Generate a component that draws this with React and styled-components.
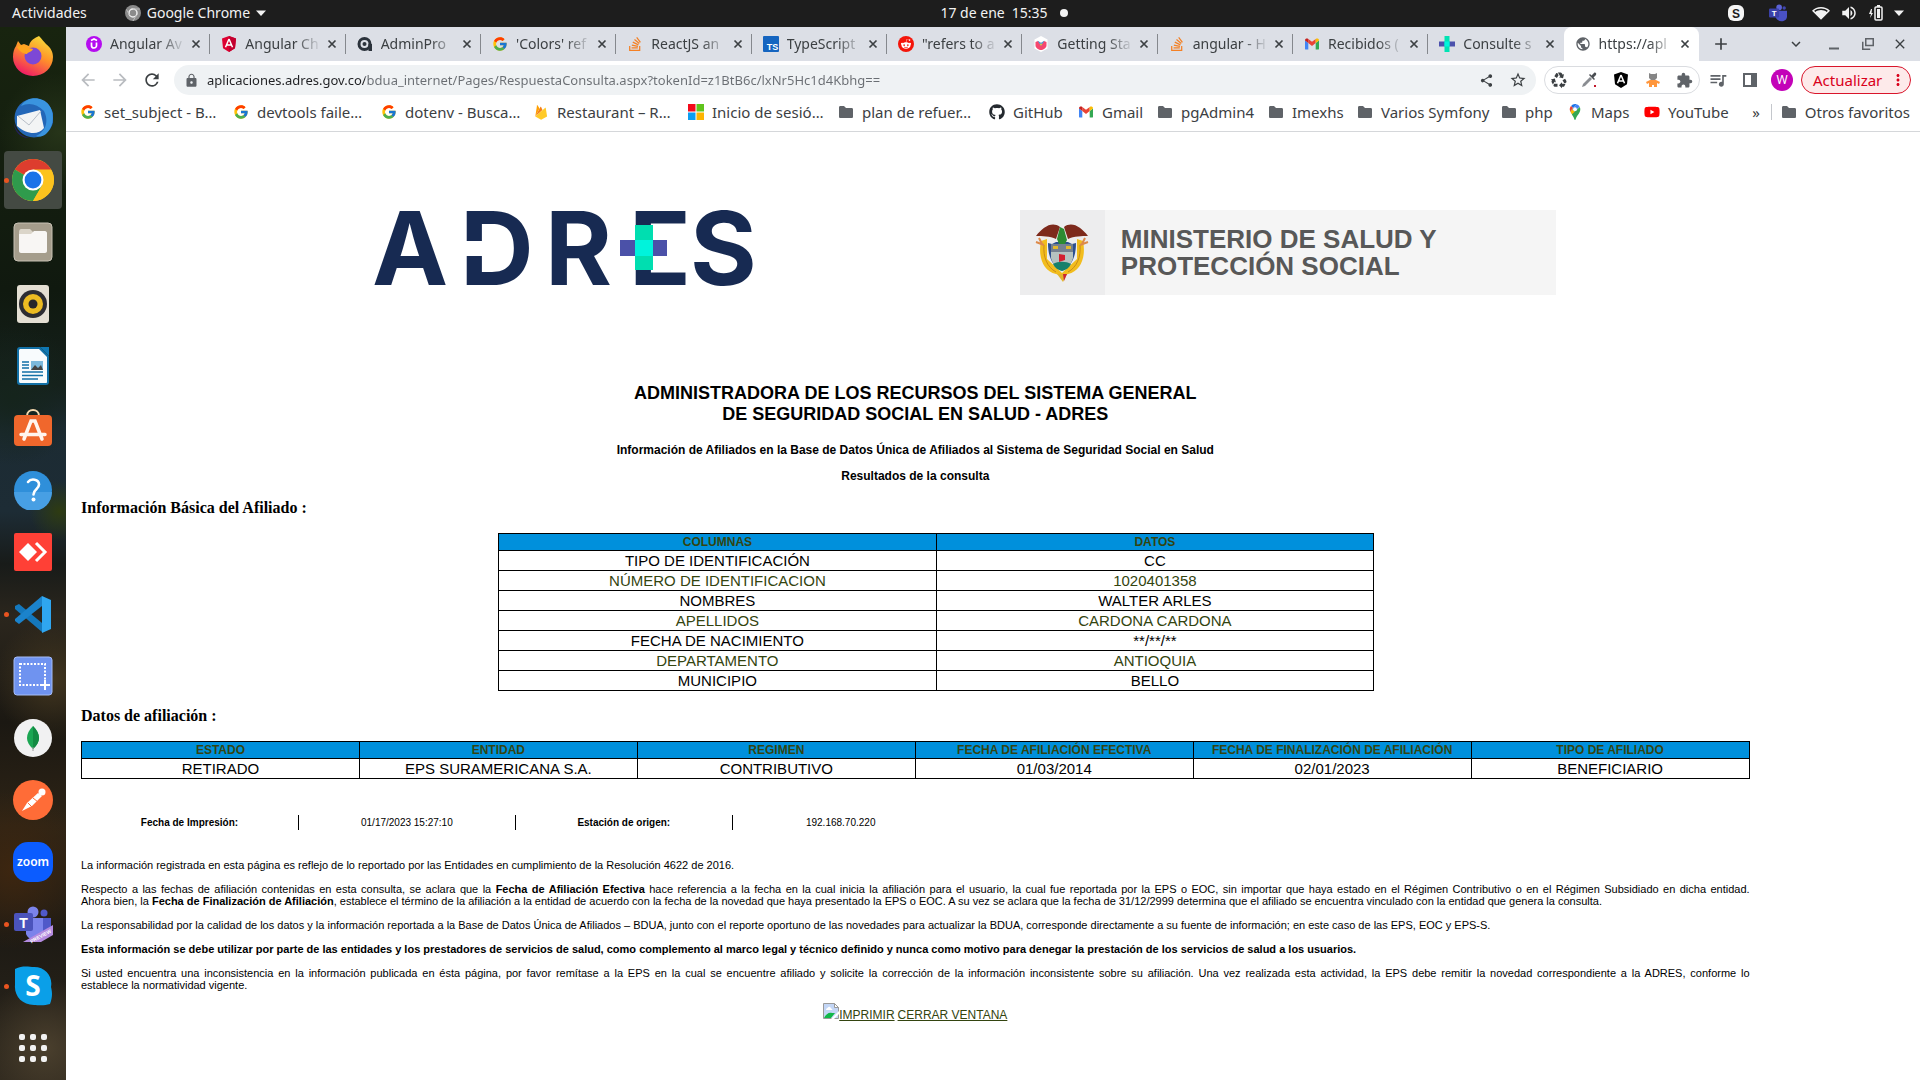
import React from "react";
import styled, { createGlobalStyle, css } from "styled-components";
import { FcGoogle } from "react-icons/fc";
import { FaRedditAlien, FaStackOverflow, FaGithub, FaYoutube } from "react-icons/fa";
import {
  MdArrowBack, MdArrowForward, MdRefresh, MdLock, MdShare, MdStarBorder, MdExtension,
  MdQueueMusic, MdPublic, MdMoreVert, MdClose, MdAdd, MdKeyboardArrowDown, MdVolumeUp,
  MdRecycling, MdNetworkWifi,
} from "react-icons/md";

const ui = '"Noto Sans", "Open Sans", sans-serif';
const arial = '"Liberation Sans", Arial, sans-serif';
const olive = "#33440f";

const GlobalStyle = createGlobalStyle`
  * { box-sizing: border-box; }
  body { margin: 0; background: #fff; }
  button { border: 0; padding: 0; margin: 0; background: none; color: inherit; font: inherit; }
  svg { display: block; flex: none; }
  a { color: inherit; }
`;

const Desktop = styled.div`
  display: grid;
  grid-template-columns: 66px minmax(0, 1fr);
  grid-template-rows: 27px 1fr;
  min-height: 100vh;
  font-family: ${ui};
`;

/* ---------- system bar ---------- */
const SystemBar = styled.header`
  grid-column: 1 / -1;
  display: grid;
  grid-template-columns: 1fr auto 1fr;
  align-items: center;
  padding: 0 16px 1px 12px;
  background: #1d1d1d;
  color: #f2f2f2;
  font-size: 14px;
  line-height: 20px;
`;
const BarGroup = styled.div`
  display: flex;
  align-items: center;
  gap: ${(p) => p.$gap}px;
  justify-content: ${(p) => (p.$end ? "flex-end" : "flex-start")};
`;
const BarButton = styled.button`
  display: flex;
  align-items: center;
  gap: 6px;
`;
const Clock = styled.div`
  display: flex;
  align-items: center;
  gap: 7px;
  padding-left: 92px;
`;
const Dot = styled.span`
  width: 8px;
  height: 8px;
  margin-left: 5px;
  border-radius: 50%;
  background: #f2f2f2;
`;

/* ---------- dock ---------- */
const DockBar = styled.nav`
  display: flex;
  flex-direction: column;
  align-items: center;
  gap: 4px;
  background:
    radial-gradient(circle at 90% 10%, #263419 0, transparent 60px),
    radial-gradient(circle at 20% 35%, #15241c 0, transparent 70px),
    radial-gradient(circle at 90% 46%, #2e3b12 0, transparent 30px),
    radial-gradient(circle at 80% 62%, #41351f 0, transparent 60px),
    radial-gradient(circle at 20% 80%, #3d2610 0, transparent 80px),
    radial-gradient(circle at 70% 97%, #4a3f2d 0, transparent 70px),
    linear-gradient(#18240f 0, #10190f 25%, #15201c 34%, #1c2b33 38%, #1d2c35 46%, #181b19 51%, #2b261d 56%, #1b1812 66%, #2e2416 76%, #1d1a14 86%, #2d271d 100%);
`;
const DockSlot = styled.button`
  display: grid;
  place-items: center;
  position: relative;
  width: 58px;
  height: 58px;
  border-radius: 4px;
  background: ${(p) => (p.$active ? "#444a43" : "transparent")};
  ${(p) =>
    p.$running &&
    css`
      &::before {
        content: "";
        position: absolute;
        left: 0;
        top: 27px;
        width: 5px;
        height: 5px;
        border-radius: 50%;
        background: #e95420;
      }
    `}
`;

/* ---------- browser ---------- */
const Browser = styled.div`
  display: flex;
  flex-direction: column;
  min-width: 0;
  background: #fff;
`;
const TabStrip = styled.div`
  display: flex;
  align-items: stretch;
  height: 34px;
  padding: 0 2px 0 9px;
  background: #dcdfe6;
  color: #3c4043;
`;
const TabList = styled.div`
  display: flex;
  flex: 1 1 auto;
  max-width: 1624px;
  min-width: 0;
`;
const Tab = styled.div`
  display: flex;
  flex: 1 1 0;
  min-width: 0;
  align-items: center;
  gap: 8px;
  padding: 0 9px 0 11px;
  border-radius: ${(p) => (p.$active ? "8px 8px 0 0" : "0")};
  background:
    ${(p) => (p.$active ? "#fff" : p.$divider ? "linear-gradient(#85888d, #85888d) right center / 1px 20px no-repeat" : "none")};
`;
const TabTitle = styled.span`
  flex: 1;
  min-width: 0;
  overflow: hidden;
  white-space: nowrap;
  font-size: 14px;
  line-height: 20px;
  -webkit-mask-image: linear-gradient(90deg, #000 68%, rgba(0, 0, 0, 0.1));
  mask-image: linear-gradient(90deg, #000 68%, rgba(0, 0, 0, 0.1));
`;
const IconButton = styled.button`
  display: grid;
  place-items: center;
  width: ${(p) => p.$w || 16}px;
  height: 100%;
  color: ${(p) => p.$color || "#3c4043"};
`;
const WindowButtons = styled.div`
  display: flex;
  margin-left: auto;
`;
const Toolbar = styled.div`
  display: flex;
  align-items: center;
  height: 38px;
  padding: 0 9px 0 6px;
  color: #5f6368;
`;
const AddressBar = styled.label`
  display: flex;
  align-items: center;
  flex: 1;
  min-width: 0;
  height: 30px;
  margin: 0 8px 0 6px;
  padding: 0 2px 0 10px;
  border-radius: 15px;
  background: #eff2f4;
`;
const AddressInput = styled.input`
  flex: 1;
  min-width: 0;
  margin-left: 8px;
  padding: 0;
  border: 0;
  outline: 0;
  font: 13px/20px ${ui};
  background: linear-gradient(90deg, #202124 158px, #6a6e73 158px);
  -webkit-background-clip: text;
  background-clip: text;
  -webkit-text-fill-color: transparent;
`;
const Extensions = styled.div`
  display: flex;
  align-items: center;
  height: 28px;
  border: 1px solid #dadce0;
  border-radius: 14px;
  margin-right: 2px;
`;
const Avatar = styled.button`
  width: 22px;
  height: 22px;
  margin: 0 8px 0 5px;
  border-radius: 50%;
  background: #c302b8;
  color: #fff;
  font-size: 12px;
  line-height: 22px;
`;
const UpdateButton = styled.button`
  display: flex;
  align-items: center;
  justify-content: space-between;
  width: 110px;
  height: 28px;
  padding: 0 3px 0 11px;
  border: 1px solid #d9152b;
  border-radius: 14px;
  background: #fdeaea;
  color: #d9001b;
  font-size: 15px;
`;
const Bookmarks = styled.nav`
  display: flex;
  align-items: center;
  height: 33px;
  padding: 0 10px 6px 14px;
  border-bottom: 1px solid #d5d7da;
  color: #3c4043;
  font-size: 15px;
  line-height: 20px;
`;
const Bookmark = styled.a`
  display: flex;
  flex: 0 1 ${(p) => (p.$w ? p.$w + "px" : "auto")};
  align-items: center;
  gap: 8px;
  white-space: nowrap;
  text-decoration: none;
`;
const BookmarkEnd = styled.div`
  display: flex;
  align-items: center;
  margin-left: auto;
`;
const Divider = styled.span`
  width: 1px;
  height: 16px;
  margin: 0 9px 0 11px;
  background: #c4c7cc;
`;

/* ---------- page ---------- */
const Page = styled.main`
  width: 90%;
  margin-left: 15px;
  padding-top: 78px;
  font-family: ${arial};
  color: #000;
`;
const Logos = styled.div`
  display: flex;
  justify-content: center;
  gap: 266px;
  height: 85px;
  padding-left: 99px;
`;
const Ministry = styled.div`
  display: flex;
  width: 536px;
  background: #f5f5f5;
`;
const Crest = styled.div`
  display: grid;
  place-items: center;
  width: 85px;
  background: #ededee;
`;
const MinistryName = styled.div`
  align-self: center;
  margin-left: 16px;
  color: #585858;
  font: 700 26px/27px ${arial};
`;
const Title = styled.h1`
  margin: 88px 0 18px;
  font-size: 18px;
  line-height: 21px;
  text-align: center;
`;
const Subtitle = styled.h2`
  margin: 0 0 12px;
  font-size: 12px;
  line-height: 14px;
  text-align: center;
`;
const SectionTitle = styled.h3`
  margin: 16px 0;
  font: 700 16px/18px "Liberation Serif", "Times New Roman", serif;
`;
const DataTable = styled.table`
  width: ${(p) => p.$width || "100%"};
  margin-left: ${(p) => p.$indent || "0"};
  border-collapse: collapse;
  table-layout: fixed;
  text-align: center;
  th, td { padding: 0; border: 1px solid #000; }
  th { background: #0090dc; color: ${olive}; font-size: 12px; line-height: 16px; }
  td { font-size: 15px; line-height: 19px; }
`;
const Row = styled.tr`
  color: ${(p) => (p.$alt ? olive : "#000")};
`;
const PrintInfo = styled.div`
  display: grid;
  grid-template-columns: repeat(4, 1fr);
  width: 52%;
  margin: 36px 0 29px;
  font-size: 10px;
  line-height: 15px;
  text-align: center;
`;
const PrintCell = styled.span`
  font-weight: ${(p) => (p.$bold ? 700 : 400)};
  & + & { border-left: 1px solid #000; }
`;
const Paragraph = styled.p`
  margin: 0 0 12px;
  font-size: 11px;
  line-height: 12px;
  text-align: justify;
  font-weight: ${(p) => (p.$bold ? 700 : 400)};
`;
const FullLine = styled.span`
  display: block;
  text-align-last: justify;
`;
const Actions = styled.div`
  display: flex;
  justify-content: center;
  align-items: baseline;
  gap: 3px;
  font-size: 12px;
  line-height: 14px;
  color: ${olive};
  a { display: flex; align-items: baseline; }
`;

/* ---------- small drawings ---------- */
const Svg = ({ s = 16, box = 16, children }) => (
  <svg width={s} height={s} viewBox={`0 0 ${box} ${box}`} aria-hidden="true">{children}</svg>
);
const LogoLetter = styled.text`
  font: 700 102px Inter, sans-serif;
  fill: #172a52;
`;
const GlyphText = styled.text`
  font-family: ${(p) => p.$font || arial};
  font-size: ${(p) => p.$size}px;
  font-weight: ${(p) => p.$weight || 700};
  fill: ${(p) => p.$fill || "#fff"};
  text-anchor: middle;
`;

const GmailIcon = () => (
  <Svg>
    <path d="M1 13V4.500L4.300 7v6.500H2A1 1 0 0 1 1 13z" fill="#4285f4" />
    <path d="M15 13V4.500L11.700 7v6.500H14a1 1 0 0 0 1-.5z" fill="#34a853" />
    <path d="M4.300 7V3L8 5.800 11.700 3v4L8 9.900z" fill="#ea4335" />
    <path d="M1 4.500C1 2.500 3 2 4.300 3v4L1 4.600z" fill="#c5221f" />
    <path d="M15 4.500c0-2-2-2.500-3.300-1.500v4L15 4.600z" fill="#fbbc04" />
  </Svg>
);
const PlusLogo = () => (
  <Svg>
    <path d="M0 5.500h16v5H0z" fill="#4b51ad" />
    <path d="M5.500 0h5v16h-5z" fill="#00e3b4" />
    <path d="M5.500 5.500h5v5h-5z" fill="#00f5dc" />
  </Svg>
);
const StackIcon = () => <FaStackOverflow size={16} color="#f48024" />;
const FolderIcon = () => (
  <Svg><path d="M1 3.500C1 2.500 1.500 2 2.500 2H6l2 2h5.500c1 0 1.500.5 1.500 1.500v7c0 1-.5 1.500-1.500 1.500h-11C1.500 14 1 13.500 1 12.500z" fill="#5f6368" /></Svg>
);
const MicrosoftIcon = () => (
  <Svg>
    <path d="M0 0h7.500v7.500H0z" fill="#f30a1b" />
    <path d="M8.500 0H16v7.500H8.500z" fill="#5fc41c" />
    <path d="M0 8.500h7.500V16H0z" fill="#0d9df0" />
    <path d="M8.500 8.500H16V16H8.500z" fill="#fdb400" />
  </Svg>
);
const FirebaseIcon = () => (
  <Svg>
    <path d="M2.300 12.500 4 1.500c.1-.4.500-.4.700-.1l1.800 3.200z" fill="#ffa000" />
    <path d="M2.300 12.500 7.400 3c.2-.3.500-.3.700 0l1.400 3z" fill="#f57f17" />
    <path d="M2.300 12.500 12 4c.3-.3.700-.1.800.2l1.300 8.300-5.500 3a1 1 0 0 1-1 0z" fill="#ffca28" />
  </Svg>
);
const MapsIcon = () => (
  <Svg>
    <path d="M8 0a5.300 5.300 0 0 0-4 1.900L6.200 4 9.800.3A5 5 0 0 0 8 0z" fill="#1a73e8" />
    <path d="M4 1.900A5.300 5.300 0 0 0 3.300 7.500L6.200 4z" fill="#ea4335" />
    <path d="M9.800.3 6.200 4 3.300 7.500l1.500 2.600 7.900-7.300A5.300 5.300 0 0 0 9.800.3z" fill="#4285f4" />
    <path d="M3.300 7.500 6.500 4a2 2 0 0 0 3 2.700l-4 4.600z" fill="#fbbc04" />
    <path d="M12.700 2.900 4.800 10.500C6.500 12.500 7 14 7.300 15.300c.2.900 1.200.9 1.400 0C9.500 11.500 13.300 9.500 13.300 5.300c0-.9-.2-1.700-.6-2.400z" fill="#34a853" />
    <circle cx="8" cy="5.200" r="1.900" fill="#fff" />
  </Svg>
);
const UdemyIcon = () => (
  <Svg>
    <circle cx="8" cy="8" r="8" fill="#b50cf0" />
    <path d="M5 4.500 8 3l3 1.500M5.500 6.500v3a2.500 2.500 0 0 0 5 0v-3" stroke="#fff" strokeWidth="1.700" fill="none" />
  </Svg>
);
const AngularIcon = ({ red }) => (
  <Svg>
    <path d="M8 0 15 2.500 14 12.300 8 16 2 12.300 1 2.500z" fill={red ? "#dd0031" : "#000"} />
    {red && <path d="M8 0v16l6-3.700L15 2.500z" fill="#c3002f" />}
    <path d="M8 3 4.500 11.300M8 3l3.500 8.300M5.700 9h4.600" stroke="#fff" strokeWidth="1.500" fill="none" />
  </Svg>
);
const AdminIcon = () => (
  <Svg>
    <circle cx="7.500" cy="8" r="5.500" stroke="#2b323b" strokeWidth="3" fill="none" />
    <circle cx="7.500" cy="8" r="2" fill="#2b323b" />
    <path d="M11.500 8H15v7h-3.500z" fill="#2b323b" />
  </Svg>
);
const TsIcon = () => (
  <Svg>
    <rect width="16" height="16" rx="1" fill="#1565c0" />
    <GlyphText x="9.500" y="14" $size="9">TS</GlyphText>
  </Svg>
);
const RedditIcon = () => (
  <Svg>
    <circle cx="8" cy="8" r="8" fill="#f4150a" />
    <g transform="translate(2.500 2.500)"><FaRedditAlien size={11} color="#fff" /></g>
  </Svg>
);
const CapIcon = () => (
  <Svg>
    <path d="M8 0l6.500 3.500v9L8 16l-6.500-3.500v-9z" fill="#fff" />
    <path d="M2.500 6 5 5l3 2 3-2 2.500 1v3.500C13.500 12 10 14 8 14s-5.500-2-5.500-4.500z" fill="#f5466e" />
    <path d="M4.500 4.500 8 10l3.500-5.500L8 7z" fill="#31a8e8" />
    <path d="M6.500 7.300 8 10l1.500-2.700L8 8z" fill="#fdc12a" />
  </Svg>
);
const ChromeMark = ({ s }) => (
  <Svg s={s} box={40}>
    <circle cx="20" cy="20" r="20" fill="#fcc31e" />
    <path d="M20 20 2.700 10A20 20 0 0 1 37.300 10z" fill="#dd3d2e" />
    <path d="M2.700 10A20 20 0 0 0 20 40L28.700 25 20 20z" fill="#2f9b4c" />
    <path d="M37.300 10H20v10l8.700 5L20 40A20 20 0 0 0 37.300 10z" fill="#fcc31e" />
    <circle cx="20" cy="20" r="10" fill="#fff" />
    <circle cx="20" cy="20" r="8" fill="#1a73e8" />
  </Svg>
);

const dockIcons = [
  { name: "Firefox", art: (<>
    <defs>
      <linearGradient id="ff" x1=".8" y1="0" x2=".3" y2="1"><stop offset="0" stopColor="#f4e03c" /><stop offset=".45" stopColor="#ff9528" /><stop offset="1" stopColor="#ef1768" /></linearGradient>
    </defs>
    <path d="M26 0c3 3 5 6 7 8 5 4 7 8 7 13a20 19 0 0 1-40 0c0-5 1-8 3-11l2-5 3 4 3-1 5 2c1-6 6-8 10-10z" fill="url(#ff)" />
    <circle cx="20" cy="20" r="8.500" fill="#7d48d6" />
    <path d="M4 11c5-3 9-2 12 1l4 1c-1 3-5 3-6 5-3 0-7-2-10-7z" fill="#ffa51f" />
  </>) },
  { name: "Thunderbird", art: (<>
    <circle cx="21" cy="20" r="19.500" fill="#2467b8" />
    <path d="M8 8C14-2 29-2 36 7c6 8 5 22-3 29-4 3-7 3-10 2 10-5 13-15 8-25C24 6 16 4 8 8z" fill="#3a94df" />
    <path d="M4 18 27 12 31 30C25 38 13 36 4 28z" fill="#f3f4f5" />
    <path d="m5 18 11 9 12-14" fill="none" stroke="#b8bec7" strokeWidth="1" />
    <path d="M1 25c2 9 9 14 16 15-7 1-16-5-16-15z" fill="#23215c" />
  </>) },
  { name: "Chrome", active: true, running: true },
  { name: "Archivos", art: (<>
    <rect x="1" y="1" width="38" height="38" rx="4" fill="#a59d8c" stroke="#c7c1b4" />
    <path d="M6 10c0-2 1-3 2-3h9l3 3v4H6z" fill="#dbd5c9" /><path d="M6 12h12l3-3h11c1 0 2 1 2 2v18c0 1-1 2-2 2H8c-1 0-2-1-2-2z" fill="#f8f6f4" />
  </>) },
  { name: "Rhythmbox", art: (<>
    <rect x="4" y="1" width="32" height="38" rx="3" fill="#e4dfd3" />
    <circle cx="20" cy="20" r="14" fill="#2d2d32" /><circle cx="20" cy="20" r="10" fill="#ecbb22" />
    <circle cx="20" cy="20" r="4.500" fill="#26262a" />
  </>) },
  { name: "Writer", art: (<>
    <path d="M7 1h20l9 9v26c0 2-1 3-3 3H7c-2 0-3-1-3-3V4c0-2 1-3 3-3z" fill="#1270a6" />
    <path d="M7 3h19l8 8v24c0 2 0 2-2 2H8c-1 0-2 0-2-2V4z" fill="#f8fbfd" /><path d="M27 1h9v9z" fill="#0f77b2" />
    <path d="M9 16h7M9 19h7M9 22h7M9 26h21M9 29.500h21M9 33h16" stroke="#1270a6" strokeWidth="1.600" />
    <path d="M18 15h12v9H18z" fill="#7cb9dd" /><path d="m18 24 4-5 3 3 3-3 2 5z" fill="#444" />
  </>) },
  { name: "Software", art: (<>
    <path d="M14 8c0-8 12-8 12 0" fill="none" stroke="#f6d8ae" strokeWidth="2" />
    <rect x="1" y="7" width="38" height="31" rx="4" fill="#f0672c" />
    <path d="M11 31 18 13h4l7 18M8 26.500h24" fill="none" stroke="#fff5ef" strokeWidth="3.500" strokeLinecap="round" />
  </>) },
  { name: "Ayuda", art: (<>
    <circle cx="20" cy="20" r="19" fill="#2f8fda" /><path d="M1 22h38a19 19 0 0 1-38 0z" fill="#479fe4" />
    <path d="M15 12c3-4 11-3 11 2.500 0 5-5.500 4.500-5.500 10" stroke="#fff" strokeWidth="2.600" fill="none" strokeLinecap="round" />
    <circle cx="20.500" cy="29.500" r="2" fill="#fff" />
  </>) },
  { name: "AnyDesk", art: (<>
    <rect x="1" y="1" width="38" height="38" rx="2" fill="#ff4036" />
    <path d="m15 11 9 9-9 9-9-9z" fill="#fff" /><path d="m23 11 9 9-9 9" stroke="#fff" strokeWidth="3" fill="none" />
  </>) },
  { name: "Visual Studio Code", running: true, art: (<>
    <path d="m2 12 4-2 23 19v9L2 15z" fill="#1478bd" /><path d="m2 27 4 3 23-18V2L2 25z" fill="#1b83cc" />
    <path d="M29 2l9 4v29l-9 4z" fill="#2fa6f0" />
  </>) },
  { name: "Captura", art: (<>
    <rect x="1" y="1" width="38" height="38" rx="3" fill="#6f93f0" stroke="#a6bcf6" />
    <rect x="7" y="8" width="25" height="21" fill="none" stroke="#fff" strokeWidth="2" strokeDasharray="2 1.500" />
    <path d="M32 24v10M27 29h10" stroke="#fff" strokeWidth="2" />
  </>) },
  { name: "MongoDB Compass", art: (<>
    <circle cx="20" cy="20" r="19" fill="#f1f1f2" /><path d="M20 8c8 8 8 16 0 23-8-7-8-15 0-23z" fill="#1ba653" />
    <path d="M20 8c8 8 8 16 0 23z" fill="#138a43" /><path d="M20 29v4" stroke="#999" />
  </>) },
  { name: "Postman", art: (<>
    <circle cx="20" cy="20" r="20" fill="#ff6c37" />
    <path d="m9 31 5-8 11-10 4 3-10 10z" fill="#fff" /><circle cx="29" cy="12" r="3.500" fill="#fff" />
    <path d="m15 23 4 4M20 18l5 4" stroke="#ff6c37" />
  </>) },
  { name: "Zoom", art: (<>
    <rect width="40" height="40" rx="15" fill="#0b5cff" />
    <GlyphText x="20" y="24" $size="12" $weight={600} $font={ui}>zoom</GlyphText>
  </>) },
  { name: "Teams", running: true, art: (<>
    <circle cx="20" cy="8" r="5.500" fill="#7b83eb" /><circle cx="31" cy="9" r="3.500" fill="#5059c9" />
    <path d="M22 14h16v12c0 6-10 7-13 2z" fill="#5059c9" /><path d="M13 14h17v15c-1 8-14 9-17 1z" fill="#7b83eb" />
    <rect x="1" y="9" width="19" height="18" rx="2" fill="#4b53bc" />
    <GlyphText x="10.500" y="23.500" $size="14">T</GlyphText>
    <path d="M10 38 40 21v10L28 38z" fill="#b48be0" />
    <GlyphText x="28" y="34" $size="5" transform="rotate(-29 28 33)">PREVIEW</GlyphText>
  </>) },
  { name: "Skype", running: true, art: (<>
    <path d="M2 3c8-4 14-2 19-2 12 0 19 10 17 20 1 4 2 9-1 17-6 2-12 1-16 1C9 39 1 30 2 19z" fill="#0a9fe8" />
    <GlyphText x="20" y="30" $size="28" $font={ui}>S</GlyphText>
  </>) },
  { name: "Aplicaciones", art: (<>
    {[9, 20, 31].flatMap((y) => [9, 20, 31].map((x) => (
      <rect key={x + "-" + y} x={x - 3} y={y - 3} width="6" height="6" rx="2" fill="#f2f2f2" />
    )))}
  </>) },
];

const tabs = [
  ["Angular Av", <UdemyIcon />], ["Angular Ch", <AngularIcon red />], ["AdminPro", <AdminIcon />],
  ["'Colors' ref", <FcGoogle size={16} />], ["ReactJS an", <StackIcon />], ["TypeScript", <TsIcon />],
  ['"refers to a', <RedditIcon />], ["Getting Sta", <CapIcon />], ["angular - H", <StackIcon />],
  ["Recibidos (", <GmailIcon />], ["Consulte s", <PlusLogo />], ["https://apl", <MdPublic size={16} color="#5f6368" />],
];

const bookmarks = [
  ["set_subject - B…", <FcGoogle size={16} />, 153], ["devtools faile…", <FcGoogle size={16} />, 148],
  ["dotenv - Busca…", <FcGoogle size={16} />, 152], ["Restaurant – R…", <FirebaseIcon />, 155],
  ["Inicio de sesió…", <MicrosoftIcon />, 150], ["plan de refuer…", <FolderIcon />, 151],
  ["GitHub", <FaGithub size={16} color="#24292f" />, 89], ["Gmail", <GmailIcon />, 79],
  ["pgAdmin4", <FolderIcon />, 111], ["Imexhs", <FolderIcon />, 89], ["Varios Symfony", <FolderIcon />, 144],
  ["php", <FolderIcon />, 66], ["Maps", <MapsIcon />, 77], ["YouTube", <FaYoutube size={16} color="#f00" />, 100],
];

const person = [
  ["TIPO DE IDENTIFICACIÓN", "CC"], ["NÚMERO DE IDENTIFICACION", "1020401358"],
  ["NOMBRES", "WALTER ARLES"], ["APELLIDOS", "CARDONA CARDONA"],
  ["FECHA DE NACIMIENTO", "**/**/**"], ["DEPARTAMENTO", "ANTIOQUIA"], ["MUNICIPIO", "BELLO"],
];
const affiliation = [
  ["ESTADO", "RETIRADO"], ["ENTIDAD", "EPS SURAMERICANA S.A."], ["REGIMEN", "CONTRIBUTIVO"],
  ["FECHA DE AFILIACIÓN EFECTIVA", "01/03/2014"], ["FECHA DE FINALIZACIÓN DE AFILIACIÓN", "02/01/2023"],
  ["TIPO DE AFILIADO", "BENEFICIARIO"],
];

const TopBar = () => (
  <SystemBar>
    <BarGroup $gap={38}>
      <BarButton>Actividades</BarButton>
      <BarButton>
        <Svg><circle cx="8" cy="8" r="8" fill="#8b8b8b" /><circle cx="8" cy="8" r="4" fill="none" stroke="#eee" strokeWidth="1.500" /><path d="M8 4h7M4.500 10 1.500 4.500M11.500 10 8 16" stroke="#bbb" /></Svg>
        Google Chrome
        <Svg s={10} box={10}><path d="M0 2.500h10L5 8z" fill="#f2f2f2" /></Svg>
      </BarButton>
    </BarGroup>
    <Clock><span>17 de ene</span><span>15:35</span><Dot /></Clock>
    <BarGroup $gap={25} $end>
      <Svg><rect width="16" height="16" rx="6" fill="#f5f5f5" /><GlyphText x="8" y="12.500" $size="12" $fill="#1d1d1d">S</GlyphText></Svg>
      <Svg s={18}><circle cx="9" cy="3" r="2.500" fill="#5b62d6" /><circle cx="13.500" cy="3.500" r="1.500" fill="#4046b0" /><path d="M6 6h10v5c0 5-8 6-10 1z" fill="#4a51c4" /><rect y="4" width="9" height="8" rx="1" fill="#3b41a8" /><GlyphText x="4.500" y="10.500" $size="7">T</GlyphText></Svg>
      <BarGroup $gap={10}>
        <MdNetworkWifi size={18} />
        <MdVolumeUp size={18} />
        <Svg><path d="M3 4 1 9h2l-1 4 3-5H3.500L4 4zM9 0h3v2H9z" fill="#f2f2f2" /><rect x="7" y="2" width="7" height="13" rx="1" fill="none" stroke="#f2f2f2" strokeWidth="1.500" /><path d="M9 4h3v9H9z" fill="#f2f2f2" /></Svg>
        <Svg s={10} box={10}><path d="M0 2.500h10L5 8z" fill="#f2f2f2" /></Svg>
      </BarGroup>
    </BarGroup>
  </SystemBar>
);

const Dock = () => (
  <DockBar>
    {dockIcons.map((d) => (
      <DockSlot key={d.name} aria-label={d.name} $active={d.active} $running={d.running}>
        {d.art ? <Svg s={40} box={40}>{d.art}</Svg> : <ChromeMark s={42} />}
      </DockSlot>
    ))}
  </DockBar>
);

const Tabs = () => (
  <TabStrip>
    <TabList>
      {tabs.map(([title, icon], i) => (
        <Tab key={title} $active={i === 11} $divider={i < 10}>
          {icon}
          <TabTitle>{title}</TabTitle>
          <IconButton $w={10} aria-label="Cerrar pestaña">
            <Svg s={10} box={10}><path d="M1.500 1.500l7 7M8.500 1.500l-7 7" stroke="#3c4043" strokeWidth="1.700" /></Svg>
          </IconButton>
        </Tab>
      ))}
    </TabList>
    <IconButton $w={44} aria-label="Nueva pestaña"><MdAdd size={20} /></IconButton>
    <WindowButtons>
      <IconButton $w={36} aria-label="Buscar pestañas"><MdKeyboardArrowDown size={18} /></IconButton>
      <IconButton $w={40} aria-label="Minimizar"><Svg><path d="M3 12.500h10" stroke="#5f6368" strokeWidth="2" /></Svg></IconButton>
      <IconButton $w={28} aria-label="Restaurar"><Svg s={12}><path d="M5 1h10v9H5zM1 5v10h10" fill="none" stroke="#5f6368" strokeWidth="2" /></Svg></IconButton>
      <IconButton $w={36} aria-label="Cerrar"><MdClose size={16} /></IconButton>
    </WindowButtons>
  </TabStrip>
);

const Tools = () => (
  <Toolbar>
    <IconButton $w={32} $color="#b9bcc0" aria-label="Atrás"><MdArrowBack size={20} /></IconButton>
    <IconButton $w={32} $color="#b9bcc0" aria-label="Adelante"><MdArrowForward size={20} /></IconButton>
    <IconButton $w={32} aria-label="Recargar"><MdRefresh size={20} /></IconButton>
    <AddressBar>
      <MdLock size={15} />
      <AddressInput aria-label="Dirección" defaultValue="aplicaciones.adres.gov.co/bdua_internet/Pages/RespuestaConsulta.aspx?tokenId=z1BtB6c/lxNr5Hc1d4Kbhg==" />
      <IconButton $w={32} aria-label="Compartir"><MdShare size={15} /></IconButton>
      <IconButton $w={32} aria-label="Favorito"><MdStarBorder size={18} /></IconButton>
    </AddressBar>
    <Extensions>
      <IconButton $w={28} aria-label="Reciclar"><MdRecycling size={18} /></IconButton>
      <IconButton $w={32} aria-label="Cuentagotas">
        <Svg s={18} box={18}><path d="M2 16l1-3 7-7 2 2-7 7z" fill="#8a8d92" /><path d="M9 4l5 5 1-1-1.500-1.500L16 4c1-2-1-3-2-2l-2.500 2.500L10 3z" fill="#4a4d52" /><path d="M14 14h2v2h-2z" fill="#c2182b" /></Svg>
      </IconButton>
      <IconButton $w={32} aria-label="Angular"><AngularIcon /></IconButton>
      <IconButton $w={32} aria-label="Mascota">
        <Svg><path d="M4 1l2 1h4l2-1v5l-2 2H6L4 6z" fill="#868686" /><path d="M5 8h6l4 2-1 2-2-1v4H9v-2H7v2H4v-4l-2 1-1-2z" fill="#ff963c" /></Svg>
      </IconButton>
      <IconButton $w={30} $color="#5f6368" aria-label="Extensiones"><MdExtension size={17} /></IconButton>
    </Extensions>
    <IconButton $w={32} $color="#5f6368" aria-label="Multimedia"><MdQueueMusic size={20} /></IconButton>
    <IconButton $w={32} aria-label="Panel lateral">
      <Svg><path d="M1 1h14v14H1zM3 3v10h6V3z" fill="#5f6368" fillRule="evenodd" /></Svg>
    </IconButton>
    <Avatar>W</Avatar>
    <UpdateButton>Actualizar <MdMoreVert size={18} /></UpdateButton>
  </Toolbar>
);

const BookmarkBar = () => (
  <Bookmarks>
    {bookmarks.map(([name, icon, w]) => (
      <Bookmark key={name} href="#" $w={w}>{icon}{name}</Bookmark>
    ))}
    <BookmarkEnd>
      <span>»</span>
      <Divider />
      <Bookmark href="#"><FolderIcon />Otros favoritos</Bookmark>
    </BookmarkEnd>
  </Bookmarks>
);

const AdresLogo = () => (
  <svg width="380" height="85" viewBox="0 0 380 85" role="img" aria-label="ADRES">
    <LogoLetter x="-2" y="75">A</LogoLetter>
    <LogoLetter x="86" y="75">D</LogoLetter>
    <LogoLetter x="171" y="75">R</LogoLetter>
    <LogoLetter x="255" y="75">E</LogoLetter>
    <LogoLetter x="316" y="75">S</LogoLetter>
    <path d="M90 31h20v15H90z" fill="#fff" />
    <path d="M259 15h50v45h-50z" fill="#fff" />
    <path d="M246 30h47v16h-47z" fill="#4b51a8" />
    <path d="M261 15h18v45h-18z" fill="#00deb0" />
    <path d="M261 30h18v16h-18z" fill="#00f3dc" />
  </svg>
);

const CrestArt = () => (
  <svg width="54" height="60" viewBox="0 0 54 60" aria-hidden="true">
    <path d="M25 4C17-2 8 4 1 13c6 0 14 0 20 3zM29 4c8-6 17 0 24 9-6 0-14 0-20 3z" fill="#7d2a1c" />
    <path d="M6 18c-3 14 1 30 15 33l6 2 6-2c14-3 18-19 15-33l-6-2v20L27 50 12 36V16z" fill="#f2bd1d" />
    <path d="M9 22c-1 12 3 22 12 27M45 22c1 12-3 22-12 27" fill="none" stroke="#c98a1a" strokeWidth="1" />
    <path d="M13 20c0 12 3 22 14 28 11-6 14-16 14-28l-4 1-4-2H21l-4 2z" fill="#2d4f8f" />
    <path d="M16 21h22v14c-2 7-6 11-11 13-5-2-9-6-11-13z" fill="#b6c3c0" />
    <path d="M16 21h22v8H16z" fill="#75818f" />
    <path d="M18 41c5-3 13-3 18 0-2 4-5 6-9 7-4-1-7-3-9-7z" fill="#17806b" />
    <path d="M25 4l4 2 3 11-2 4h-6l-2-5z" fill="#2c8b32" />
    <path d="M24 31l6 1v5l-6 2z" fill="#d3202f" />
    <path d="M18 23h5v3h-5zM31 23h5v3h-5z" fill="#e3b92d" />
    <path d="M1 19l8 3M53 19l-8 3M4 15l3 6M50 15l-3 6" stroke="#dd8a4a" strokeWidth="2" />
    <path d="M22 51h10l-4 8z" fill="#e2b52c" /><path d="M28 51h4l-3 7z" fill="#cc2533" />
  </svg>
);

const BrokenImage = () => (
  <svg width="16" height="16" viewBox="0 0 16 16" aria-hidden="true">
    <path d="M.5.500h11l4 4v11H.500z" fill="#c3d6f6" stroke="#9a9a9a" />
    <path d="M11.500.500v4h4z" fill="#fff" stroke="#9a9a9a" />
    <path d="M3 7c0-2 2-2 2.500-3C7 3 8 5 8 5.500 9.500 5.500 9.500 7 9 7z" fill="#fff" />
    <path d="M1 15c2-4 5-6 8-5h3l-4 5z" fill="#12b84a" />
    <path d="M8 16l8-8v3l-5 5z" fill="#fff" />
  </svg>
);

const Report = () => (
  <Page>
    <Logos>
      <AdresLogo />
      <Ministry>
        <Crest><CrestArt /></Crest>
        <MinistryName>MINISTERIO DE SALUD Y<br />PROTECCIÓN SOCIAL</MinistryName>
      </Ministry>
    </Logos>
    <Title>ADMINISTRADORA DE LOS RECURSOS DEL SISTEMA GENERAL<br />DE SEGURIDAD SOCIAL EN SALUD - ADRES</Title>
    <Subtitle>Información de Afiliados en la Base de Datos Única de Afiliados al Sistema de Seguridad Social en Salud</Subtitle>
    <Subtitle>Resultados de la consulta</Subtitle>
    <SectionTitle>Información Básica del Afiliado :</SectionTitle>
    <DataTable $width="52.5%" $indent="25%">
      <thead><tr><th>COLUMNAS</th><th>DATOS</th></tr></thead>
      <tbody>
        {person.map(([k, v], i) => <Row key={k} $alt={i % 2 === 1}><td>{k}</td><td>{v}</td></Row>)}
      </tbody>
    </DataTable>
    <SectionTitle>Datos de afiliación :</SectionTitle>
    <DataTable>
      <thead><tr>{affiliation.map(([h]) => <th key={h}>{h}</th>)}</tr></thead>
      <tbody><Row>{affiliation.map(([h, v]) => <td key={h}>{v}</td>)}</Row></tbody>
    </DataTable>
    <PrintInfo>
      <PrintCell $bold>Fecha de Impresión:</PrintCell>
      <PrintCell>01/17/2023 15:27:10</PrintCell>
      <PrintCell $bold>Estación de origen:</PrintCell>
      <PrintCell>192.168.70.220</PrintCell>
    </PrintInfo>
    <Paragraph>La información registrada en esta página es reflejo de lo reportado por las Entidades en cumplimiento de la Resolución 4622 de 2016.</Paragraph>
    <Paragraph>
      <FullLine>Respecto a las fechas de afiliación contenidas en esta consulta, se aclara que la <b>Fecha de Afiliación Efectiva</b> hace referencia a la fecha en la cual inicia la afiliación para el usuario, la cual fue reportada por la EPS o EOC, sin importar que haya estado en el Régimen Contributivo o en el Régimen Subsidiado en dicha entidad.</FullLine>
      {" "}Ahora bien, la <b>Fecha de Finalización de Afiliación</b>, establece el término de la afiliación a la entidad de acuerdo con la fecha de la novedad que haya presentado la EPS o EOC. A su vez se aclara que la fecha de 31/12/2999 determina que el afiliado se encuentra vinculado con la entidad que genera la consulta.
    </Paragraph>
    <Paragraph>La responsabilidad por la calidad de los datos y la información reportada a la Base de Datos Única de Afiliados – BDUA, junto con el reporte oportuno de las novedades para actualizar la BDUA, corresponde directamente a su fuente de información; en este caso de las EPS, EOC y EPS-S.</Paragraph>
    <Paragraph $bold>Esta información se debe utilizar por parte de las entidades y los prestadores de servicios de salud, como complemento al marco legal y técnico definido y nunca como motivo para denegar la prestación de los servicios de salud a los usuarios.</Paragraph>
    <Paragraph>
      <FullLine>Si usted encuentra una inconsistencia en la información publicada en ésta página, por favor remítase a la EPS en la cual se encuentre afiliado y solicite la corrección de la información inconsistente sobre su afiliación. Una vez realizada esta actividad, la EPS debe remitir la novedad correspondiente a la ADRES, conforme lo</FullLine>
      {" "}establece la normatividad vigente.
    </Paragraph>
    <Actions>
      <a href="#"><BrokenImage />IMPRIMIR</a>
      <a href="#">CERRAR VENTANA</a>
    </Actions>
  </Page>
);

export default function App() {
  return (
    <>
      <GlobalStyle />
      <Desktop>
        <TopBar />
        <Dock />
        <Browser>
          <Tabs />
          <Tools />
          <BookmarkBar />
          <Report />
        </Browser>
      </Desktop>
    </>
  );
}
